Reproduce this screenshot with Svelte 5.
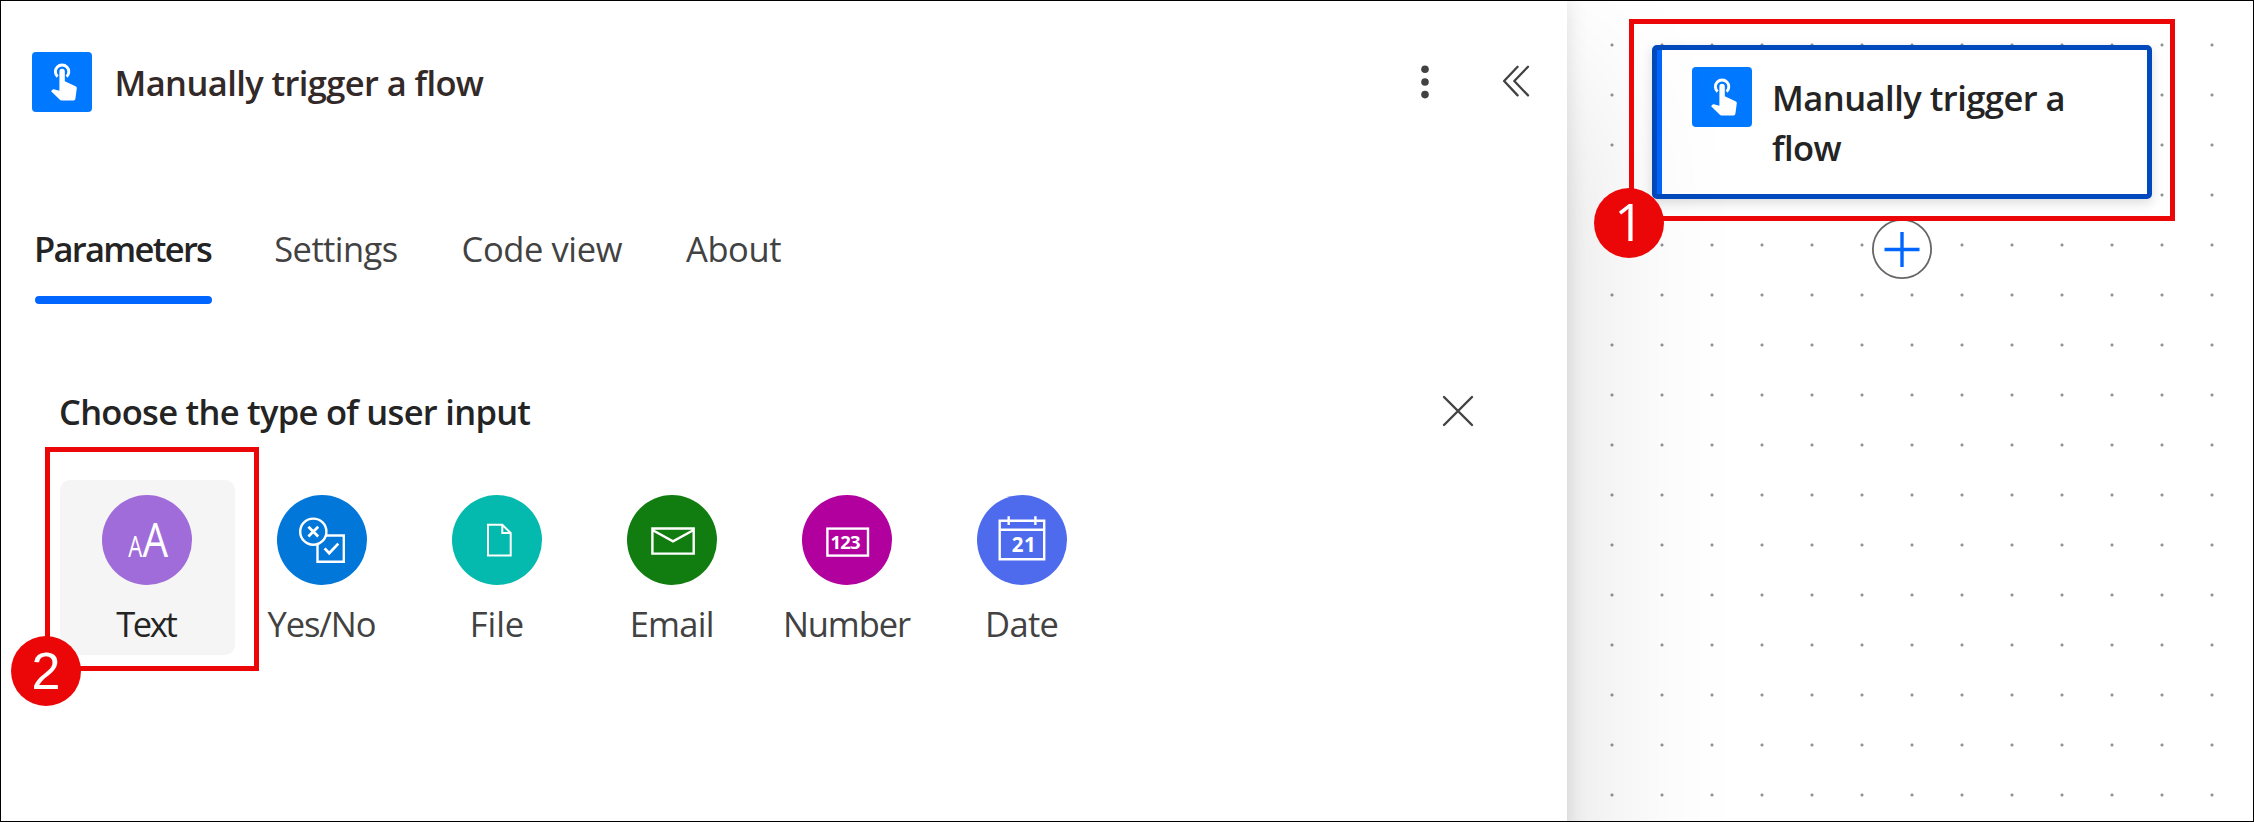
<script>
  const tabs = [
    { label: 'Parameters', active: true, tracking: -1.69 },
    { label: 'Settings', tracking: -0.57 },
    { label: 'Code view', tracking: -0.4 },
    { label: 'About', tracking: -0.4 }
  ];

  const inputs = [
    { id: 'text', label: 'Text', color: '#a06cd9', selected: true, tracking: -2.4 },
    { id: 'bool', label: 'Yes/No', color: '#0077d9', tracking: -1.1 },
    { id: 'file', label: 'File', color: '#04b9ad', tracking: -0.1 },
    { id: 'email', label: 'Email', color: '#117d10', tracking: -0.75 },
    { id: 'number', label: 'Number', color: '#b1009e', tracking: -1.1 },
    { id: 'date', label: 'Date', color: '#4f6bed', tracking: -0.67 }
  ];
</script>

{#snippet touch()}
  <svg class="touch" viewBox="0 0 60 60" aria-hidden="true">
    <path class="ring" d="M25.6 24.6A6.7 6.7 0 1 1 34.6 24.6" />
    <path
      class="hand"
      d="M27.4 19.4a2.7 2.7 0 0 1 5.4 0V29.3L43.5 34.2Q44.9 34.9 44.8 36.3L43.4 46.8Q43.2 48.4 41.6 48.4H29.6Q28.4 48.4 27.6 47.5L19.1 39.2 20.3 37.7Q20.9 37.1 21.8 37.3L27.4 38.7Z"
    />
  </svg>
{/snippet}

<main>
  <section class="panel">
    <header>
      {@render touch()}
      <h1>Manually trigger a flow</h1>
      <svg class="more" viewBox="0 0 12 40" aria-hidden="true">
        <circle cx="6" cy="7.3" r="3.8" /><circle cx="6" cy="20" r="3.8" /><circle cx="6" cy="32.6" r="3.8" />
      </svg>
      <svg class="collapse" viewBox="0 0 30 40" aria-hidden="true">
        <path d="M16.6 4.8 3.1 19 16.6 33.4M27 4.8 13.3 19 27 33.4" />
      </svg>
    </header>

    <nav>
      {#each tabs as tab}
        <button class="tab" class:active={tab.active} style:letter-spacing="{tab.tracking}px">{tab.label}</button>
      {/each}
    </nav>

    <div class="chooser">
      <div class="chooser-head">
        <h2>Choose the type of user input</h2>
        <svg viewBox="0 0 32 32" aria-hidden="true"><path d="M2 2 30 30M30 2 2 30" /></svg>
      </div>

      <div class="cards">
        {#each inputs as item}
          <div class="card" class:selected={item.selected}>
            <svg class="disc" viewBox="0 0 90 90" aria-hidden="true">
              <circle cx="45" cy="45" r="45" fill={item.color} />
              {#if item.id === 'text'}
                <text class="thin" x="26.2" y="62.3" font-size="28.5" textLength="14" lengthAdjust="spacingAndGlyphs">A</text>
                <text class="thin" x="40.4" y="62.3" font-size="47" textLength="25.6" lengthAdjust="spacingAndGlyphs">A</text>
              {:else if item.id === 'bool'}
                <path class="line" d="M49 40.5H66.8V66.8H40.5V49" />
                <circle class="line" cx="36.3" cy="36.7" r="13.1" />
                <path class="line bold" d="M31.4 31.8 41.2 41.6M41.2 31.8 31.4 41.6M47.6 53.4 52.2 58.3 61.3 48.6" />
              {:else if item.id === 'file'}
                <path class="line fine" d="M36 29.7H50.3L58.7 38V60.5H36ZM50.3 29.7V38H58.7" />
              {:else if item.id === 'email'}
                <path class="line" d="M25.4 33.5H66.7V58.6H25.4ZM25.4 35 46 46.4 66.7 35" />
              {:else if item.id === 'number'}
                <rect class="line" x="25.4" y="33.6" width="40.6" height="27" />
                <text class="digits" x="28.6" y="53.9" font-size="18.5" textLength="30" lengthAdjust="spacing">123</text>
              {:else}
                <path class="line" d="M22.7 25.7H67.2V64.3H22.7ZM22.7 34.7H67.2M31.7 21.3V30M58.4 21.3V30" />
                <text class="digits" x="34.8" y="56.8" font-size="20.5" textLength="24" lengthAdjust="spacing">21</text>
              {/if}
            </svg>
            <span style:letter-spacing="{item.tracking}px" style:padding-right="{-item.tracking}px">{item.label}</span>
          </div>
        {/each}
        <div class="callout callout-two"><b>2</b></div>
      </div>
    </div>
  </section>

  <section class="canvas">
    <div class="node">
      {@render touch()}
      <h3>Manually trigger a flow</h3>
    </div>
    <svg class="add" viewBox="0 0 60 60" aria-hidden="true">
      <circle cx="30" cy="30" r="29.1" /><path d="M12.5 30.5H47.5M30 13V48" />
    </svg>
    <div class="callout callout-one"><b>1</b></div>
  </section>
</main>

<style>
  :global(body) { background: #fff; }
  main {
    box-sizing: border-box;
    width: 2254px;
    height: 822px;
    border: 1px solid #000;
    display: flex;
    overflow: hidden;
    background: #fff;
    font: 400 34.5px/50px 'Open Sans', 'Noto Sans', sans-serif;
    color: #424242;
  }
  h1, h2, h3 { margin: 0; font-size: inherit; font-weight: 600; white-space: nowrap; }
  svg { display: block; flex: none; overflow: visible; }

  .panel {
    box-sizing: border-box;
    width: 1566px;
    height: 1400px;
    flex: none;
    padding: 51px 0 0 31px;
    background: #fff;
    position: relative;
    z-index: 1;
    box-shadow: 0 0 20px rgba(0, 0, 0, .12), 0 80px 160px rgba(0, 0, 0, .14);
  }
  header { display: flex; align-items: center; height: 60px; }
  h1 { margin-left: 22.5px; padding-top: 2px; letter-spacing: -.6px; color: #322928; }
  .touch { width: 60px; height: 60px; border-radius: 4px; background: #0078ff; }
  .ring { fill: none; stroke: #fff; stroke-width: 2.9; }
  .hand { fill: #fff; }
  .more { width: 12px; height: 40px; margin-left: auto; fill: #424242; }
  .collapse { width: 30px; height: 40px; margin: 0 36px 0 70px; fill: none; stroke: #424242; stroke-width: 2.3; stroke-linecap: round; stroke-linejoin: round; }

  nav { display: flex; gap: 64px; margin: 112px 0 0 2px; height: 80px; }
  .tab { position: relative; height: 50px; padding: 0; border: 0; background: none; font: inherit; color: inherit; white-space: nowrap; }
  .active { font-weight: 600; color: #242424; margin-right: -1px; }
  .active::after { content: ''; position: absolute; left: 1px; width: 177px; top: 72px; height: 8px; border-radius: 4px; background: #0066ff; }

  .chooser { padding: 83px 93px 0 28px; }
  .chooser-head { display: flex; align-items: center; justify-content: space-between; height: 50px; }
  .chooser-head svg { width: 32px; height: 32px; margin: -2px 0 0; fill: none; stroke: #424242; stroke-width: 2.4; stroke-linecap: round; }
  h2 { letter-spacing: -.71px; color: #242424; margin-left: -1px; }
  .cards { position: relative; display: flex; margin-top: 43px; }
  .card { box-sizing: border-box; width: 175px; height: 175px; padding: 15px 1px 0 0; border-radius: 10px; display: flex; flex-direction: column; align-items: center; gap: 14px; white-space: nowrap; }
  .selected { background: #f5f5f5; color: #242424; }
  .disc { width: 90px; height: 90px; }
  .line { fill: none; stroke: #fff; stroke-width: 2.4; }
  .bold { stroke-width: 2.8; }
  .fine { stroke-width: 2; }
  .thin { fill: #fff; font-weight: 400; }
  .digits { fill: #fff; font-weight: 700; }

  .canvas {
    position: relative;
    flex: 1;
    background: radial-gradient(circle at 25px 25px, #92929a 1px, rgba(146, 146, 154, 0) 2px) 20px 19px / 50px 50px #fff;
  }
  .node {
    position: absolute;
    box-sizing: border-box;
    left: 85px;
    top: 44px;
    width: 500px;
    height: 154px;
    padding: 17px 30px 0 30px;
    display: flex;
    gap: 20px;
    border: 5px solid #004abd;
    border-radius: 5px;
    background: #fff;
    box-shadow: inset 5px 0 #0066ff, 0 4px 12px rgba(0, 0, 0, .14);
    color: #242424;
  }
  .node .touch { margin-left: 5px; }
  .node h3 { margin-top: 6px; width: 320px; white-space: normal; letter-spacing: -.52px; }
  .add { position: absolute; left: 305px; top: 218px; width: 60px; height: 60px; fill: #fff; stroke: #666; stroke-width: 1.8; }
  .add path { stroke: #0066ff; stroke-width: 3.4; }

  .callout { position: absolute; box-sizing: border-box; border: 5px solid #eb0707; }
  .callout b {
    position: absolute;
    width: 70px;
    height: 70px;
    border-radius: 50%;
    background: #eb0707;
    color: #fff;
    font: 400 52px/70px 'Liberation Sans', Arial, sans-serif;
    text-align: center;
  }
  .callout-one { left: 62px; top: 18px; width: 546px; height: 202px; z-index: 2; }
  .callout-one b { left: -40px; top: 164px; font-family: 'Open Sans', sans-serif; line-height: 66px; }
  .callout-two { left: -15px; top: -33px; width: 214px; height: 224px; }
  .callout-two b { left: -39px; top: 184px; }
</style>
